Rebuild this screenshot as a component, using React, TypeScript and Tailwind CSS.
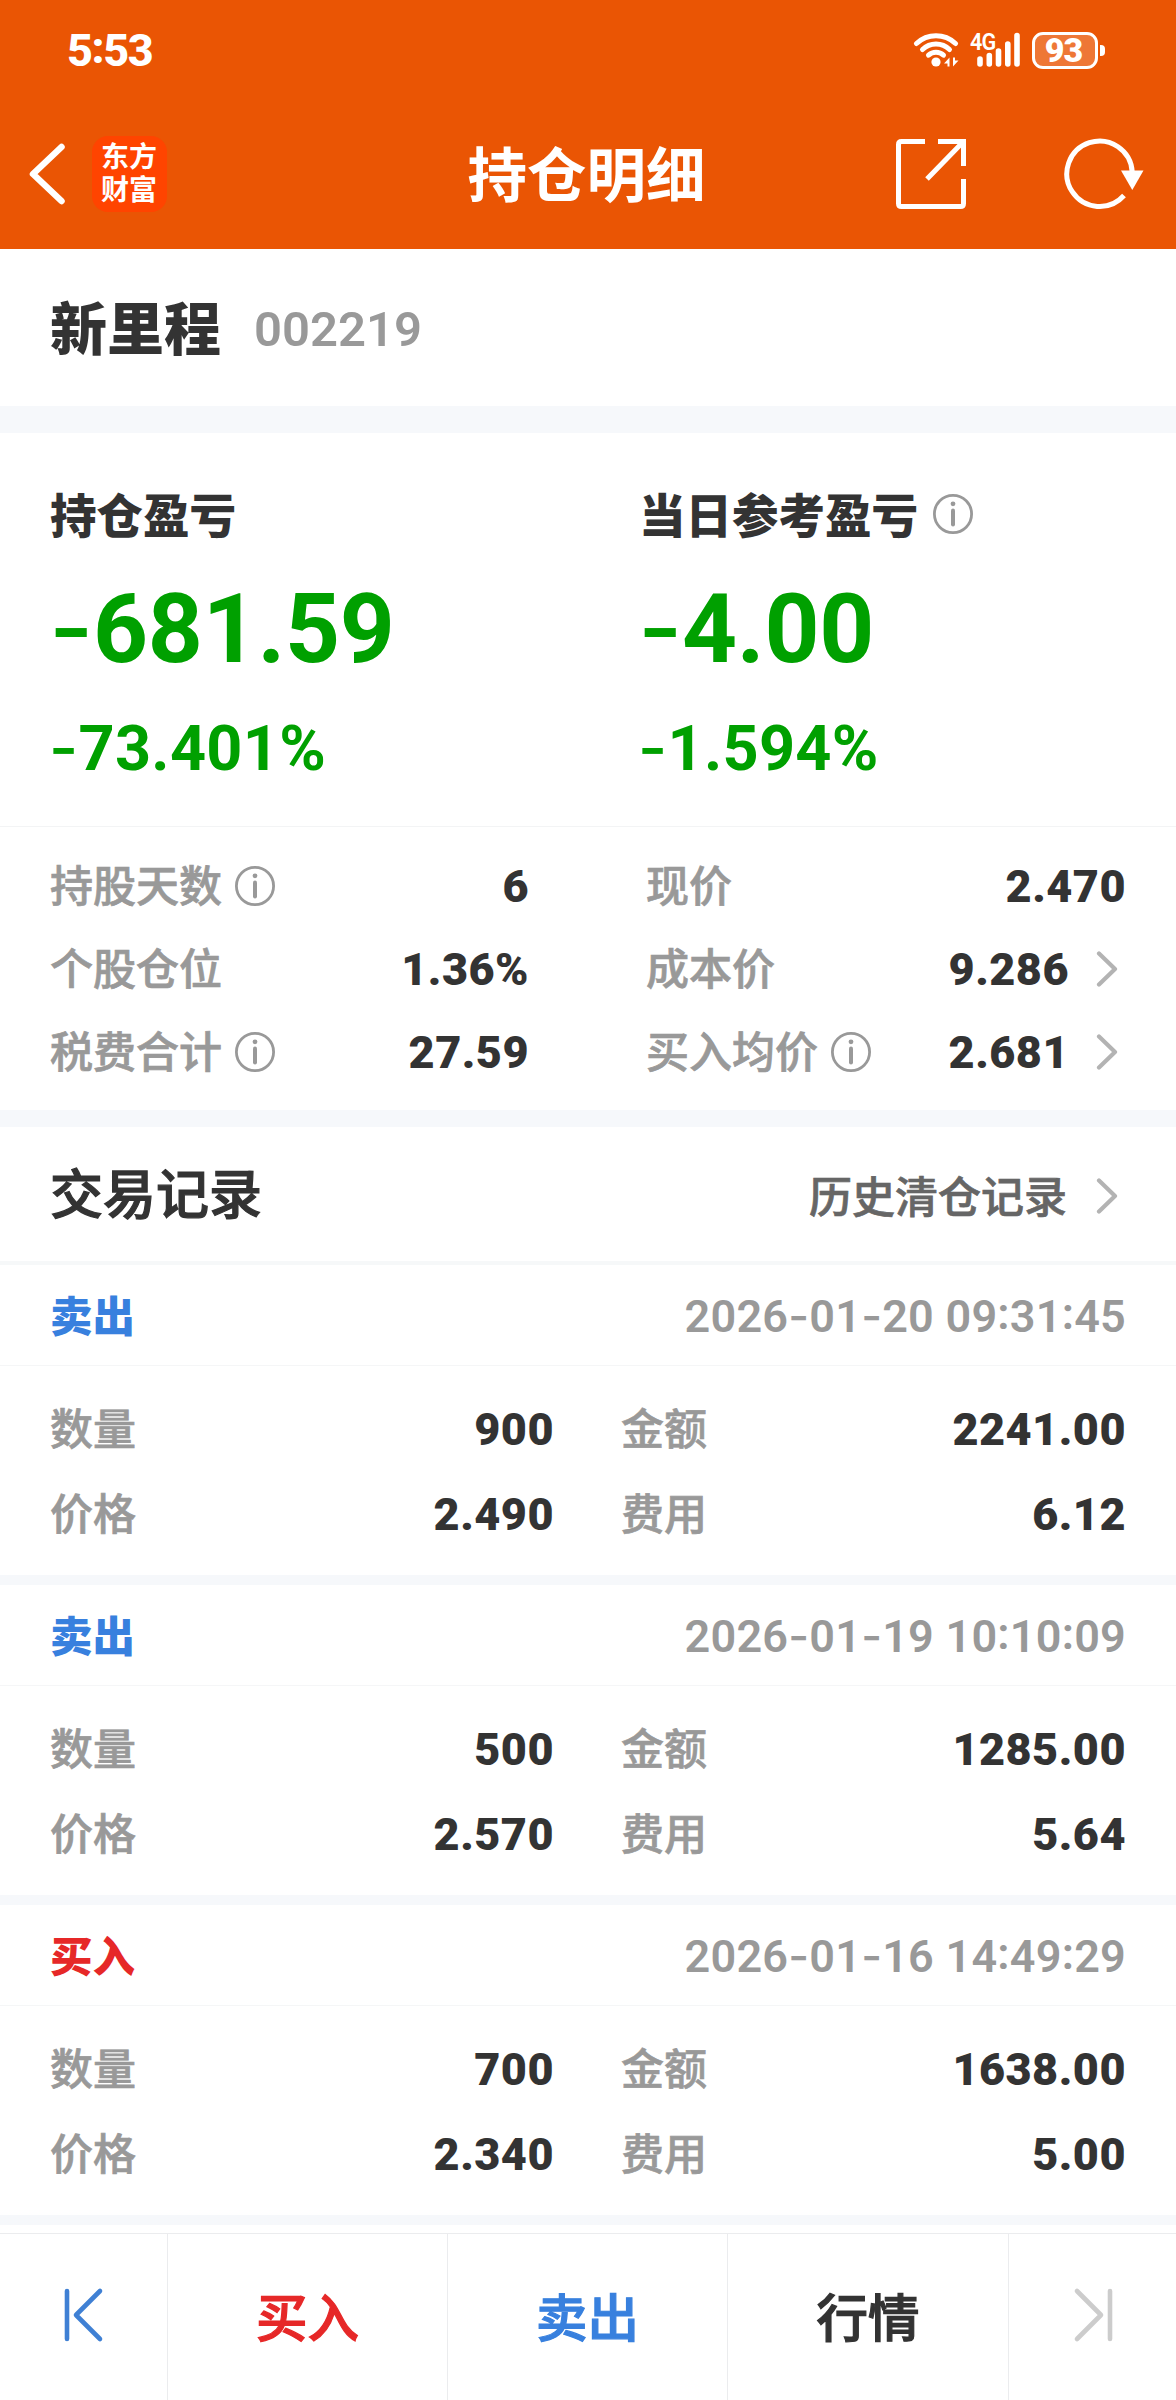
import React from 'react';

interface TradeRecord {
  side: 'buy' | 'sell';
  time: string;
  quantity: string;
  amount: string;
  price: string;
  fee: string;
}

const records: TradeRecord[] = [
  { side: 'sell', time: '2026-01-20 09:31:45', quantity: '900', amount: '2241.00', price: '2.490', fee: '6.12' },
  { side: 'sell', time: '2026-01-19 10:10:09', quantity: '500', amount: '1285.00', price: '2.570', fee: '5.64' },
  { side: 'buy', time: '2026-01-16 14:49:29', quantity: '700', amount: '1638.00', price: '2.340', fee: '5.00' },
];

const NUM = "font-['Roboto','Liberation_Sans',sans-serif] leading-none whitespace-pre";
const LABEL = "font-['Noto_Sans_CJK_SC',sans-serif] text-[43px] leading-none font-medium [-webkit-text-stroke:0.7px]";

// Digits are set in Roboto, dashes in Inter because its hyphen is wider.
// Colons are lifted to the middle of the digits.
const Num = ({ text, className }: { text: string; className: string }) => (
  <span className={`${NUM} ${className}`}>
    {text.split(/([-:])/).map((part, i) => {
      if (part === '-') return <span key={i} className="font-['Inter',sans-serif] font-medium leading-[0]">-</span>;
      if (part === ':') return <span key={i} className="align-[0.07em] leading-[0]">:</span>;
      return part;
    })}
  </span>
);

const InfoIcon = ({ className = '' }: { className?: string }) => (
  <svg className={`size-10 shrink-0 ${className}`} viewBox="0 0 40 40" fill="none">
    <circle cx="20" cy="20" r="18.6" stroke="#999" strokeWidth="2.8" />
    <circle cx="20" cy="9.8" r="2.4" fill="#999" />
    <path d="M20 16.5v14" stroke="#999" strokeWidth="4" strokeLinecap="round" />
  </svg>
);

const ChevronRight = ({ className = '' }: { className?: string }) => (
  <svg className={`h-9 w-[22px] shrink-0 ${className}`} viewBox="0 0 22 36" fill="none">
    <path d="M3 2.5L19 18L3 33.5" stroke="#b3b3b3" strokeWidth="4.2" strokeLinecap="round" strokeLinejoin="round" />
  </svg>
);

const StatusBar = () => (
  <div className="h-[100px] pl-[67px] pr-[71px] flex items-center justify-between text-white">
    <Num text="5:53" className="text-[45px] font-extrabold tracking-[-1.4px]" />
    <div className="flex items-center">
      <svg className="w-[46px] h-[38px]" viewBox="913 31 46 38" fill="none">
        <g stroke="#fff" strokeWidth="5" strokeLinecap="round">
          <path d="M916.5 43.5a28.5 28.5 0 0 1 39 0" />
          <path d="M922.5 49.5a19.5 19.5 0 0 1 27 0" />
          <path d="M928.5 55.2a11 11 0 0 1 15 0" />
        </g>
        <circle cx="936" cy="62" r="4.6" fill="#fff" />
        <path d="M944 63.5l5.5-6v9h-2v-3zM958.5 60.5l-5.5 6v-9h2v3z" fill="#fff" />
      </svg>
      <div className="ml-[10px] relative">
        <span className="absolute left-px top-px font-['Roboto',sans-serif] text-[24px] leading-[20px] font-semibold tracking-[-1px] scale-x-90 origin-left">4G</span>
        <svg className="w-[52px] h-[38px]" viewBox="969 31 52 38">
          <g stroke="#fff" strokeWidth="5.6" strokeLinecap="round">
            <path d="M980 59v5M989.3 55.5v8.5M998.5 51v13M1007.8 44v20M1017 35.5v28.5" />
          </g>
        </svg>
      </div>
      <div className="ml-[11px] w-[66px] h-[37px] rounded-[11px] border-[3px] border-white bg-white/20 flex items-center justify-center">
        <Num text="93" className="mr-[3px] text-[34px] font-black tracking-[-1px]" />
      </div>
      <div className="ml-[2px] w-[5px] h-[11px] rounded-r-[4px] bg-white" />
    </div>
  </div>
);

const NavBar = () => (
  <div className="h-[149px] flex items-center pb-[2px] pl-[27px] pr-[30px] text-white">
    <div className="flex-1 flex items-center">
      <svg className="w-[40px] h-[64px]" viewBox="0 0 40 64" fill="none">
        <path d="M34.5 5L6 32L34.5 59" stroke="#fff" strokeWidth="6.5" strokeLinecap="round" strokeLinejoin="round" />
      </svg>
      <div className="ml-[25px] w-[75px] h-[76px] rounded-[16px] bg-[#ff4400] flex pl-[9px] pt-[3px]">
        <div className="w-[56px] font-['Noto_Sans_CJK_SC',sans-serif] text-[28px] leading-[33px] font-bold break-all">东方财富</div>
      </div>
    </div>
    <h1 className="pb-[3px] font-['Noto_Sans_CJK_SC',sans-serif] text-[59.5px] leading-none font-bold">持仓明细</h1>
    <div className="flex-1 flex items-center justify-end">
      <svg className="w-[72px] h-[72px]" viewBox="895 138 72 72" fill="none" stroke="#fff" strokeWidth="5">
        <path d="M925 141.5h-23.5q-3 0-3 3v59q0 3 3 3h59q3 0 3-3V179" />
        <path d="M938 141.5h25.5V166M963 142L927 179" />
      </svg>
      <svg className="ml-[96px] w-[83px] h-[72px]" viewBox="1063 138 83 72" fill="none">
        <path d="M1132.2 172a32.7 32.7 0 1 0-8.2 23.5" stroke="#fff" strokeWidth="5" />
        <path d="M1121 170.5h22.5L1132.3 190z" fill="#fff" />
      </svg>
    </div>
  </div>
);

interface MetricProps {
  label: string;
  value: string;
  info?: boolean;
  link?: boolean;
}

const Metric = ({ label, value, info, link }: MetricProps) => (
  <div className="h-[83px] flex items-center">
    <span className={`${LABEL} pb-[5px] text-[#999]`}>{label}</span>
    {info && <InfoIcon className="ml-[13px]" />}
    <Num text={value} className="ml-auto pt-[2px] text-[45px] font-black tracking-[0.5px] text-[#333]" />
    {link && <ChevronRight className="ml-[27px] mr-[8px]" />}
  </div>
);

const Trade = ({ record }: { record: TradeRecord }) => {
  const isBuy = record.side === 'buy';
  const cells = [
    ['数量', record.quantity],
    ['金额', record.amount],
    ['价格', record.price],
    ['费用', record.fee],
  ];
  return (
    <section className="h-[320px] border-b-[10px] border-[#f6f8fb]">
      <div className="h-[101px] pl-[50px] pr-[50px] flex items-center justify-between border-b border-[#f5f6f7]">
        <span className={`pb-px font-['Noto_Sans_CJK_SC',sans-serif] text-[42.5px] leading-none font-black ${isBuy ? 'text-[#e62828]' : 'text-[#3880de]'}`}>
          {isBuy ? '买入' : '卖出'}
        </span>
        <Num text={record.time} className="pt-[2px] text-[45px] font-semibold text-[#999] tracking-[0.22px]" />
      </div>
      <div className="pt-[21px] pl-[50px] pr-[50px] grid grid-cols-[504px_1fr] gap-x-[67px]">
        {cells.map(([label, value]) => (
          <div key={label} className="h-[85px] flex items-center justify-between">
            <span className={`${LABEL} pb-[6px] text-[#999]`}>{label}</span>
            <Num text={value} className="text-[45px] font-black tracking-[0.5px] text-[#333]" />
          </div>
        ))}
      </div>
    </section>
  );
};

const TAB = "flex items-center justify-center border-r border-[#ebecee] pb-[4px] font-['Noto_Sans_CJK_SC',sans-serif] text-[51.5px] leading-none font-medium [-webkit-text-stroke:1.2px]";

const BottomBar = () => (
  <nav className="mt-[8px] h-[167px] border-t border-[#ebecee] grid grid-cols-[168px_280px_280px_281px_1fr]">
    <div className={TAB}>
      <svg className="w-[42px] h-[60px]" viewBox="63 2284 42 60" fill="none" stroke="#3f80d4" strokeWidth="4.6" strokeLinecap="round" strokeLinejoin="round">
        <path d="M67 2290v48M100 2290L76 2314L100 2338" />
      </svg>
    </div>
    <div className={`${TAB} text-[#e62828]`}>买入</div>
    <div className={`${TAB} text-[#3880de]`}>卖出</div>
    <div className={`${TAB} text-[#333]`}>行情</div>
    <div className="flex items-center justify-center pb-[4px]">
      <svg className="w-[42px] h-[60px]" viewBox="1071 2284 42 60" fill="none" stroke="#ccc" strokeWidth="4.6" strokeLinecap="round" strokeLinejoin="round">
        <path d="M1076 2290L1100 2314L1076 2338M1109 2290v48" />
      </svg>
    </div>
  </nav>
);

interface ProfitProps {
  label: string;
  amount: string;
  percent: string;
  info?: boolean;
}

const Profit = ({ label, amount, percent, info }: ProfitProps) => (
  <div className="flex flex-col">
    <div className="h-[46px] flex items-center">
      <span className="pl-px pb-[3px] font-['Noto_Sans_CJK_SC',sans-serif] text-[46.5px] leading-none font-black text-[#333]">{label}</span>
      {info && <InfoIcon className="ml-[15px] mb-[2px]" />}
    </div>
    <Num text={amount} className="mt-[43px] text-[96px] font-bold text-[#00a000] tracking-[-0.3px]" />
    <Num text={percent} className="mt-[40px] text-[63px] font-bold text-[#00a000] tracking-[0.3px]" />
  </div>
);

const App = () => (
  <div className="w-[1176px] h-[2400px] bg-white overflow-hidden">
    <header className="bg-[#ea5504]">
      <StatusBar />
      <NavBar />
    </header>

    <div className="h-[157px] pl-[50px] flex items-center">
      <span className="pb-[5px] font-['Noto_Sans_CJK_SC',sans-serif] text-[57px] leading-none font-black text-[#333]">新里程</span>
      <Num text="002219" className="ml-[33px] pt-[3px] text-[49px] font-semibold text-[#999]" />
    </div>

    <div className="h-[27px] bg-[#f6f8fb]" />

    <div className="h-[394px] border-b border-[#f3f4f5] grid grid-cols-[589px_1fr] pl-[49px] pt-[59px]">
      <Profit label="持仓盈亏" amount="-681.59" percent="-73.401%" />
      <Profit label="当日参考盈亏" amount="-4.00" percent="-1.594%" info />
    </div>

    <div className="h-[283px] pt-[17px] pl-[50px] pr-[50px] grid grid-cols-[479px_1fr] gap-x-[117px]">
      <div>
        <Metric label="持股天数" value="6" info />
        <Metric label="个股仓位" value="1.36%" />
        <Metric label="税费合计" value="27.59" info />
      </div>
      <div>
        <Metric label="现价" value="2.470" />
        <Metric label="成本价" value="9.286" link />
        <Metric label="买入均价" value="2.681" info link />
      </div>
    </div>

    <div className="h-[17px] bg-[#f6f8fb]" />

    <div className="h-[138px] pl-[50px] pr-[58px] flex items-center border-b-4 border-[#f6f8f9]">
      <h2 className="pb-[5px] font-['Noto_Sans_CJK_SC',sans-serif] text-[53px] leading-none font-medium [-webkit-text-stroke:1.2px] text-[#333]">交易记录</h2>
      <span className={`${LABEL} ml-auto text-[#666]`}>历史清仓记录</span>
      <ChevronRight className="ml-[29px] mt-[4px]" />
    </div>

    {records.map((record) => (
      <Trade key={record.time} record={record} />
    ))}

    <BottomBar />
  </div>
);

export default App;
